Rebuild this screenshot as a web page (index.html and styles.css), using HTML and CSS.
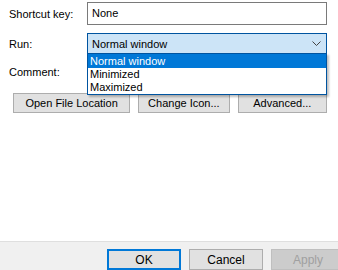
FILE: index.html
```html
<!DOCTYPE html>
<html lang="en">
<head>
<meta charset="UTF-8" />
<title>Shortcut</title>
<link rel="stylesheet" href="styles.css">
</head>
<body>
<div class="sheet">
  <div class="fields">
    <div class="row">
      <span class="label">Shortcut key:</span>
      <div class="textbox">None</div>
    </div>
    <div class="row run-row">
      <span class="label">Run:</span>
      <div class="combo-wrap">
        <div class="combo">
          <span>Normal window</span>
          <svg class="chevron" width="9" height="5" viewBox="0 0 9 5"><path d="M0.5 0.5 L4.5 4.5 L8.5 0.5" fill="none" stroke="#444" stroke-width="1"/></svg>
        </div>
        <!-- open dropdown list -->
        <ul class="combo-list">
          <li class="selected">Normal window</li>
          <li>Minimized</li>
          <li>Maximized</li>
        </ul>
      </div>
    </div>
    <div class="row comment-row">
      <span class="label">Comment:</span>
      <div class="textbox"></div>
    </div>
  </div>
  <div class="actions">
    <button class="btn btn-wide">Open File Location</button>
    <button class="btn btn-mid">Change Icon...</button>
    <button class="btn btn-mid">Advanced...</button>
  </div>
</div>
<div class="footer">
  <button class="btn btn-ok">OK</button>
  <button class="btn">Cancel</button>
  <button class="btn btn-disabled">Apply</button>
</div>
</body>
</html>
```
FILE: styles.css
```css
* { box-sizing: border-box; }
body {
  margin: 0;
  width: 338px;
  height: 270px;
  overflow: hidden;
  background: #fff;
  font-family: "Liberation Sans", Arial, sans-serif;
  font-size: 11px;
  color: #000;
  display: flex;
  flex-direction: column;
}
.sheet {
  flex: 1;
  padding: 2px 11px 0 9px;
}
.fields {
  display: flex;
  flex-direction: column;
}
.row {
  display: flex;
  align-items: center;
}
.label {
  width: 78px;
  flex: none;
}
.textbox {
  flex: 1;
  height: 23px;
  border: 1px solid #7a7a7a;
  padding: 0 4px;
  line-height: 21px;
}
.run-row {
  margin-top: 8px;
}
.combo-wrap {
  flex: 1;
  position: relative;
}
.combo {
  height: 21px;
  border: 1px solid #0054a0;
  background: #cce4f7;
  padding: 0 4px;
  display: flex;
  align-items: center;
  justify-content: space-between;
}
.chevron {
  margin-right: 1px;
}
.combo-list {
  position: absolute;
  left: 0;
  right: 0;
  top: 20px;
  margin: 0;
  padding: 0;
  list-style: none;
  background: #fff;
  border: 1px solid #0054a0;
  box-shadow: 2px 2px 2px rgba(0,0,0,0.25);
  z-index: 5;
}
.combo-list li {
  height: 13px;
  line-height: 13px;
  padding-left: 2px;
}
.combo-list li.selected {
  background: #0078d7;
  color: #fff;
  height: 14px;
  line-height: 14px;
}
.comment-row {
  margin-top: 6px;
}
.actions {
  display: flex;
  gap: 8px;
  margin: 10px 0 0 4px;
}
.btn {
  height: 20px;
  border: 1px solid #adadad;
  background: #e1e1e1;
  font-family: "Liberation Sans", Arial, sans-serif;
  font-size: 11px;
  color: #000;
  padding: 0;
}
.btn-wide { width: 118px; }
.btn-mid { width: 92px; }
.btn-mid + .btn-mid { width: 90px; }
.footer {
  height: 29px;
  flex: none;
  background: #f0f0f0;
  border-top: 1px solid #dfdfdf;
  display: flex;
  gap: 8px;
  padding: 7px 0 0 107px;
}
.footer .btn {
  width: 74px;
  height: 21px;
  flex: none;
  font-size: 12px;
}
.footer .btn-ok {
  border: 2px solid #0078d7;
}
.footer .btn-disabled {
  background: #cccccc;
  border-color: #bfbfbf;
  color: #a0a0a0;
}
```
